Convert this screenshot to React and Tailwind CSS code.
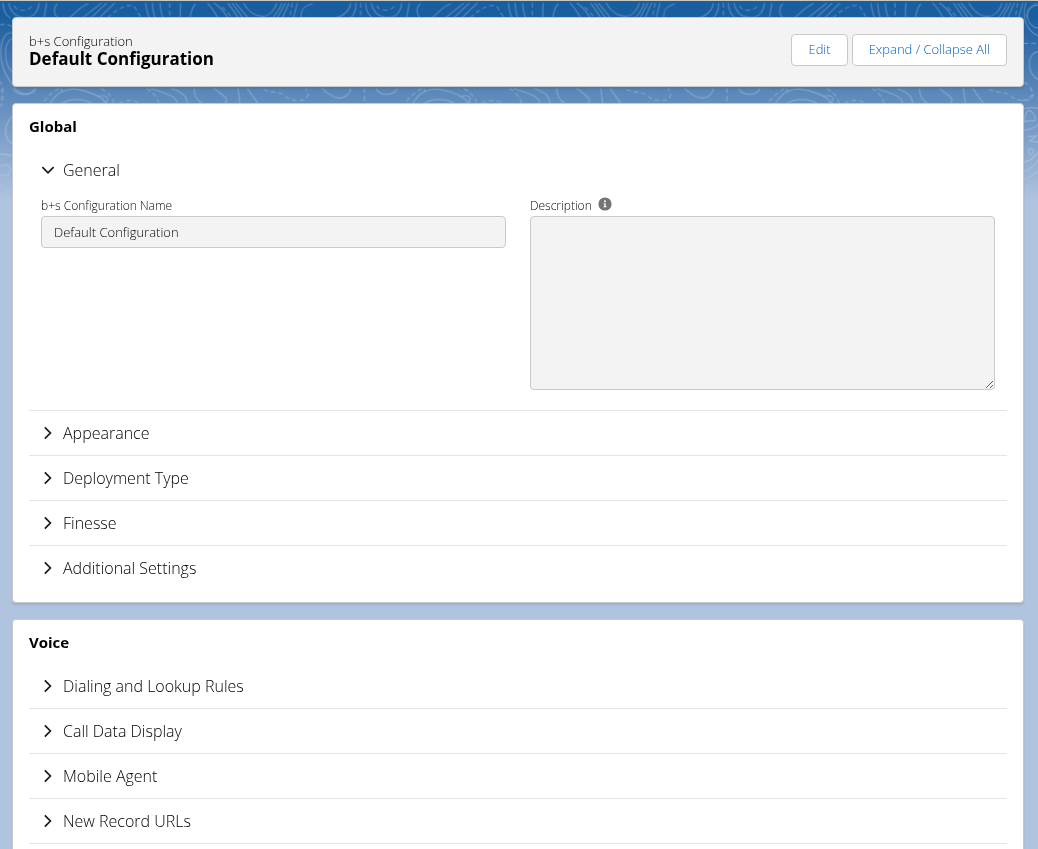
import { useState } from "react";

const GLOBAL_SECTIONS = ["General", "Appearance", "Deployment Type", "Finesse", "Additional Settings"];
const VOICE_SECTIONS = ["Dialing and Lookup Rules", "Call Data Display", "Mobile Agent", "New Record URLs"];

const SOLID =
  "M32,6 C30,30 5,48 -15,51 M48,6 C48,30 42,44 30,51 M77,6 C77,30 88,45 100,52 M94,6 C100,35 120,49 145,49 C170,49 183,30 185,6 M208,6 C205,20 202,36 200,51 M240,8 C228,20 228,40 242,51 M333,8 C310,15 295,35 275,51 M372,6 L315,51 M388,6 L340,51 M412,6 L365,51 M505,6 C507,25 511,40 516,51 M525,6 C526,25 529,40 533,51 M548,6 C549,25 552,40 557,51 M610,6 C608,20 608,36 609,51 M655,8 C642,20 640,40 638,51 M690,6 C705,20 715,40 722,51 M710,6 C735,22 740,36 752,51 M752,6 L783,51 M764,6 L797,51 M775,6 L812,51 M798,6 C815,35 835,46 855,46 C880,46 895,20 898,6 M913,6 C906,26 896,40 885,51 M924,6 L900,51 M935,6 L915,51 M960,6 L948,51 M1005,8 C980,14 968,30 972,51 " +
  "M-55,262 C-30,285 -10,292 0,291 C18,290 32,275 32,262 M108,262 C120,286 160,286 172,262 M218,309 C240,265 280,260 310,267 C345,275 378,290 388,309 M250,309 C270,292 320,290 345,309 M253,262 V272 M360,288 C375,280 392,285 391,296 C389,306 380,309 375,305 M520,262 C560,275 600,285 600,309 M582,262 C620,275 630,290 630,309 M650,262 C650,285 660,300 678,309 M710,262 C745,290 755,290 743,309 M782,262 L788,309 M810,262 L843,309";

const DASHED =
  "M110,14 C118,32 160,34 166,8 M62,6 V51 M390,51 Q440,5 470,15 L492,51 M577,6 V51 M735,18 L765,51 M945,6 L937,51 " +
  "M73,262 V309 M245,262 C225,275 205,290 195,309 M372,262 C400,280 408,295 410,309 M425,307 Q455,290 492,307 M508,262 C530,275 540,290 545,309 M858,265 C900,280 910,270 930,290 C960,305 990,300 992,280 L985,262";

const LEFT_SOLID =
  "M36,95 C-8,95 -8,190 30,240 Q50,280 80,280 Q105,275 108,262 M36,112 C8,125 12,190 36,212 M36,345 C10,375 10,410 36,428 M0,460 Q20,456 40,468 M0,496 C20,484 40,500 30,514 C22,526 8,524 0,522 M0,578 Q20,568 40,566";
const LEFT_DASHED = "M0,72 Q16,66 36,76 M0,240 Q18,272 2,318 M0,552 Q20,546 40,548";

const RIGHT_SOLID =
  "M1008,4 C992,50 1010,92 1048,106 M1048,12 C1000,12 1000,76 1048,82 M1048,152 C1006,152 1010,226 1048,236 M1000,324 Q1020,317 1048,322 M1003,362 Q1005,328 1018,328 C1028,330 1036,345 1036,358 Z M1000,388 Q1030,385 1048,368 M1014,406 L1040,405 L1020,420 L1048,424 M1023,442 a7,10 0 1,0 0.1,0 M1000,484 Q1034,476 1048,446 M1000,512 Q1034,500 1048,472 M1000,536 Q1030,526 1048,504";
const RIGHT_DASHED = "M1000,127 H1048 M1003,243 Q1030,262 1026,280 Q1018,300 990,298 M1008,566 Q1026,550 1048,540";

function Contours() {
  return (
    <svg className="absolute inset-0 size-full" aria-hidden="true">
      <defs>
        <linearGradient id="fade" x1="0" y1="0" x2="0" y2="1">
          <stop offset="0" stopColor="#fff" stopOpacity="0.28" />
          <stop offset="0.8" stopColor="#fff" stopOpacity="0.24" />
          <stop offset="1" stopColor="#fff" stopOpacity="0" />
        </linearGradient>
        <mask id="fadeMask" maskUnits="userSpaceOnUse" x="0" y="0" width="4000" height="200">
          <rect width="4000" height="200" fill="url(#fade)" />
        </mask>
        <g id="contour">
          <path d={SOLID} />
          <path d={DASHED} strokeDasharray="14 9" />
        </g>
      </defs>
      <g mask="url(#fadeMask)">
        <g transform="scale(0.33333)" fill="none" stroke="#fff" strokeWidth="3.4">
          <use href="#contour" x="-68" />
          <use href="#contour" x="1020" />
          <use href="#contour" x="2108" />
          <use href="#contour" x="3196" />
          <use href="#contour" x="4284" />
          <path d={LEFT_SOLID} />
          <path d={LEFT_DASHED} strokeDasharray="14 9" />
          <g transform="translate(2070 0)">
            <path d={RIGHT_SOLID} />
            <path d={RIGHT_DASHED} strokeDasharray="14 9" />
          </g>
        </g>
      </g>
    </svg>
  );
}

function Chevron({ open }) {
  return (
    <svg viewBox="0 0 14 14" className="size-3.5 shrink-0" fill="none" stroke="#181818" strokeWidth="1.7" aria-hidden="true">
      <path d={open ? "M1.4 4.2 L7 9.8 L12.6 4.2" : "M3.8 1.4 L9.4 7 L3.8 12.6"} />
    </svg>
  );
}

function InfoIcon() {
  return (
    <svg viewBox="0 0 14 14" className="size-3.5" aria-hidden="true">
      <circle cx="7" cy="7" r="6.6" fill="#747474" />
      <circle cx="7" cy="4.2" r="1" fill="#fff" />
      <path d="M5.6 6.2 H7.7 V9.3 H8.5 V10.3 H5.5 V9.3 H6.3 V7.1 H5.6 Z" fill="#fff" />
    </svg>
  );
}

function GeneralFields() {
  return (
    <div className="grid grid-cols-2 gap-6 px-3 pt-1 pb-5">
      <div>
        <label htmlFor="name" className="block h-5 text-xs leading-5 text-[#080707]">
          b+s Configuration Name
        </label>
        <input
          id="name"
          disabled
          defaultValue="Default Configuration"
          className="block h-8 w-full rounded border border-[#c9c9c9] bg-[#f3f3f3] px-3 text-[13px] text-[#080707]"
        />
      </div>
      <div>
        <div className="flex h-5 items-start gap-1.5">
          <label htmlFor="description" className="text-xs leading-5 text-[#080707]">
            Description
          </label>
          <button type="button" aria-label="Help" className="pt-px">
            <InfoIcon />
          </button>
        </div>
        <textarea
          id="description"
          disabled
          className="block h-[174px] w-full rounded border border-[#c9c9c9] bg-[#f3f3f3] px-3 py-2 text-[13px]"
        />
      </div>
    </div>
  );
}

function Panel({ title, sections, open, onToggle, children }) {
  return (
    <section className="rounded border border-[#c9c9c9] bg-white px-4 pb-3 shadow-[0_2px_2px_0_rgba(0,0,0,0.1)]">
      <h2 className="h-11 text-[15px] leading-[44px] font-bold">{title}</h2>
      <ul className="divide-y divide-[#e5e5e5]">
        {sections.map((name) => (
          <li key={name}>
            <h3>
              <button
                type="button"
                aria-expanded={open.includes(name)}
                onClick={() => onToggle(name)}
                className="flex h-11 w-full items-center gap-2 px-3 text-left text-base"
              >
                <Chevron open={open.includes(name)} />
                {name}
              </button>
            </h3>
            {name === "General" && open.includes(name) && <GeneralFields />}
          </li>
        ))}
      </ul>
      {children}
    </section>
  );
}

const BUTTON = "h-8 rounded border border-[#c9c9c9] bg-white px-4 text-[13px] text-[#005fc0]";

export default function App() {
  const [open, setOpen] = useState(["General"]);
  const toggle = (name) =>
    setOpen((list) => (list.includes(name) ? list.filter((n) => n !== name) : [...list, name]));
  const toggleAll = () =>
    setOpen((list) => (list.length ? [] : [...GLOBAL_SECTIONS, ...VOICE_SECTIONS]));

  return (
    <div className="relative min-h-screen overflow-hidden border-t border-[#c9c9c9] bg-[#b0c4df] font-['Open_Sans','Noto_Sans',sans-serif] font-light text-black">
      <div className="absolute inset-x-0 top-0 h-[200px] bg-linear-to-b from-[#195e9f] from-8% to-[#b0c4df]">
        <Contours />
      </div>
      <main className="relative flex flex-col gap-4 pt-4 pr-3.5 pl-3">
        <header className="flex items-start justify-between rounded border border-[#c9c9c9] bg-[#f3f3f3] p-4 shadow-[0_2px_2px_0_rgba(0,0,0,0.1)]">
          <h1>
            <span className="block text-[13px] leading-[14px]">b+s Configuration</span>
            <span className="block text-[17px] leading-[22px] font-bold">Default Configuration</span>
          </h1>
          <div className="flex gap-1">
            <button type="button" className={BUTTON}>
              Edit
            </button>
            <button type="button" className={BUTTON} onClick={toggleAll}>
              Expand / Collapse All
            </button>
          </div>
        </header>
        <Panel title="Global" sections={GLOBAL_SECTIONS} open={open} onToggle={toggle} />
        <Panel title="Voice" sections={VOICE_SECTIONS} open={open} onToggle={toggle}>
          <hr className="border-[#e5e5e5]" />
        </Panel>
      </main>
    </div>
  );
}
